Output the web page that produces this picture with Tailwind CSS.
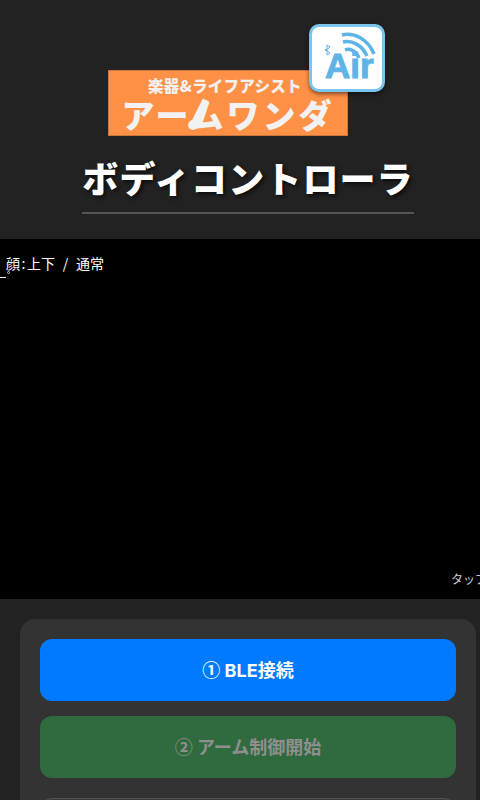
<!DOCTYPE html>
<html lang="ja">
<head>
<meta charset="utf-8">
<script src="https://cdn.jsdelivr.net/npm/@tailwindcss/browser@4"></script>
</head>
<body class="bg-[#222222] h-[800px] w-[480px] overflow-hidden font-['Inter','Noto_Sans_CJK_JP',sans-serif] text-white">
  <header class="h-[239px] flex flex-col items-center">
    <div class="relative w-[240px] h-[66px] mt-[70px] mr-[24px] bg-[#ff9147] border border-[#c9773d] flex flex-col items-center shrink-0">
      <p class="text-[15.5px] leading-[22px] mt-[3px] pr-[6px] font-black tracking-[0.3px] text-[#f2f2f2] whitespace-nowrap font-['Noto_Sans_CJK_JP',sans-serif]">楽器&amp;ライフアシスト</p>
      <p class="text-[33px] leading-[36px] font-black text-[#f2f2f2] tracking-[3px] whitespace-nowrap font-['Noto_Sans_CJK_JP',sans-serif]">アームワンダ</p>
      <svg class="absolute left-[78px] top-[26px]" width="30" height="34" viewBox="0 0 30 34" fill="none">
        <path d="M19 3 L7 27" stroke="#f2f2f2" stroke-width="7"/>
        <circle cx="6" cy="28" r="5" fill="#f2f2f2"/>
      </svg>
      <div class="absolute left-[200px] top-[-47px] w-[76px] h-[68px] rounded-[10px] bg-white border-[3px] border-[#79c5ec] shadow-[0_2px_4px_rgba(0,0,0,0.5)] overflow-hidden">
        <svg class="absolute left-0 top-0" width="70" height="62" viewBox="0 0 70 62" fill="none">
          <path d="M30 8 C42 5 56 12 62 27" stroke="#5eb4e6" stroke-width="3.5"/>
          <path d="M31 15 C40 13 50 18 55 29" stroke="#5eb4e6" stroke-width="3.5"/>
          <path d="M33 23 C38 21 44 24 47 31" stroke="#5eb4e6" stroke-width="3.5"/>
          <path d="M13 22 L18 26 L15 28 L15 18 L18 20 L13 24" stroke="#5eb4e6" stroke-width="1"/>
        </svg>
        <p class="absolute left-[13px] top-[19px] text-[35px] leading-[40px] font-bold text-[#5eb4e6] [-webkit-text-stroke:1px_#5eb4e6] font-['Liberation_Sans',sans-serif]">Air</p>
      </div>
    </div>
    <h1 class="mt-[15px] ml-[16px] h-[63px] w-[332px] shrink-0 border-b-2 border-[#555555] text-center text-[36px] leading-[52px] font-black tracking-[1.1px] whitespace-nowrap font-['Noto_Sans_CJK_JP',sans-serif] [text-shadow:2px_2px_4px_rgba(0,0,0,0.7)]">ボディコントローラ</h1>
  </header>
  <section class="relative h-[360px] bg-black overflow-hidden">
    <p class="absolute left-[6px] top-[14px] text-[14px] leading-[20px] whitespace-pre font-['Noto_Sans_CJK_JP',sans-serif]">顔<span class="inline-block w-[7px] text-center">:</span>上下<span class="inline-block w-[21px] text-center">/</span>通常</p>
    <div class="absolute left-0 top-[38px] w-[6px] h-px bg-white"></div>
    <div class="absolute left-[7px] top-[32px] w-[3px] h-[3px] rounded-full border border-white/70"></div>
    <p class="absolute left-[451px] top-[332px] text-[12px] leading-[16px] text-[#cccccc] whitespace-nowrap font-['Noto_Sans_CJK_JP',sans-serif]">タップ</p>
  </section>
  <main class="pt-5 pl-5">
    <div class="w-[456px] h-[300px] rounded-[15px] bg-[#333333] p-5 flex flex-col">
      <button class="h-[62px] shrink-0 rounded-[12px] bg-[#007bff] text-[18px] font-bold text-white"><span class="font-['Noto_Sans_CJK_JP',sans-serif]">①</span> BLE接続</button>
      <button class="mt-[15px] h-[62px] shrink-0 rounded-[12px] bg-[#2f6b3e] text-[18px] font-bold text-[#8f8f8f]"><span class="font-['Noto_Sans_CJK_JP',sans-serif]">②</span> アーム制御開始</button>
      <div class="mt-5 h-[62px] shrink-0 rounded-[12px] border border-[#555555] bg-[#3a3a3a]"></div>
    </div>
  </main>
</body>
</html>
